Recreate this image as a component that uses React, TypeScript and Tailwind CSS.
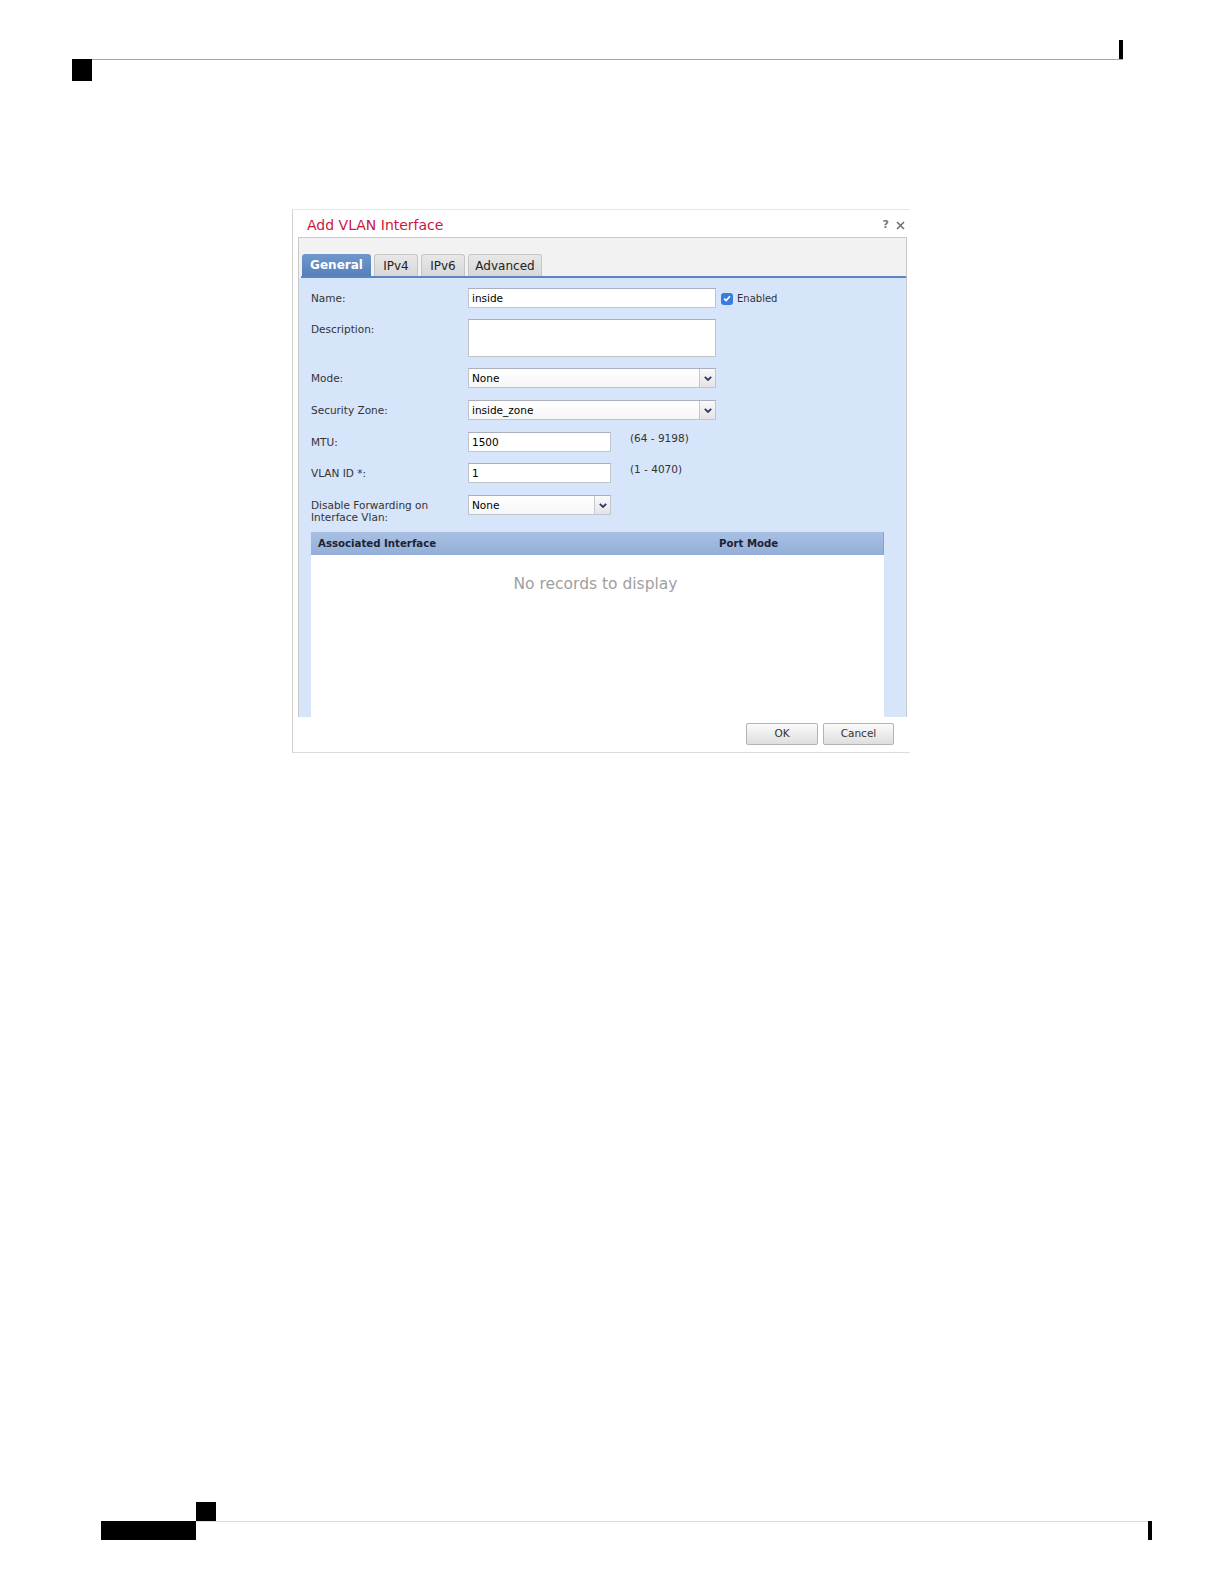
import React from 'react';

function Chevron() {
  return (
    <svg width="8" height="5" viewBox="0 0 8 5">
      <path d="M0.8 0.8 L4 4 L7.2 0.8" fill="none" stroke="#2b3a66" strokeWidth="1.8" />
    </svg>
  );
}

function Label({ children }: { children: React.ReactNode }) {
  return <div className="w-[157px] h-[20px] pt-[1px] flex items-center text-[10.5px] text-[#333]">{children}</div>;
}

function Field({ value, wide }: { value: string; wide?: boolean }) {
  return (
    <div
      className={`${wide ? 'w-[248px]' : 'w-[143px]'} h-[20px] bg-white border border-[#bfc5cd] border-t-[#a9b0ba] flex items-center px-[3px] pt-[1px] text-[10.5px] text-black`}
    >
      {value}
    </div>
  );
}

function Select({ value, wide }: { value: string; wide?: boolean }) {
  return (
    <div
      className={`${wide ? 'w-[248px]' : 'w-[143px]'} h-[20px] bg-white border border-[#bfc5cd] border-t-[#a9b0ba] flex items-stretch text-[10.5px] text-black`}
    >
      <div className="flex-1 flex items-center px-[3px] pt-[1px] bg-gradient-to-b from-white to-[#f6f6f6]">{value}</div>
      <div className="w-[16px] border-l border-[#c4c8ce] bg-gradient-to-b from-[#fafafa] to-[#e4e4e4] flex items-center justify-center">
        <Chevron />
      </div>
    </div>
  );
}

function Hint({ children }: { children: React.ReactNode }) {
  return <div className="ml-[19px] text-[10.5px] text-[#333] leading-[12px]">{children}</div>;
}

export default function App() {
  return (
    <div className="w-[1224px] h-[1584px] bg-white flex flex-col font-['DejaVu_Sans',sans-serif]">
      {/* page header */}
      <div className="pt-[40px] pl-[72px] pr-[101px]">
        <div className="flex justify-end">
          <div className="w-[4px] h-[19px] bg-black" />
        </div>
        <div className="flex">
          <div className="w-[20px] h-[22px] bg-black" />
          <div className="flex-1 h-px bg-[#a8a8a8]" />
        </div>
      </div>

      {/* dialog */}
      <div className="mt-[128px] ml-[292px] w-[618px] border-l border-t border-b border-l-[#cfcfcf] border-t-[#e6e6e6] border-b-[#dcdcdc] bg-white">
        <div className="h-[27px] pt-[3px] flex items-center justify-between pl-[14px] pr-[5px]">
          <span className="text-[14px] text-[#cc1541]">Add VLAN Interface</span>
          <div className="flex items-center gap-[7px] text-[#777] text-[11px] font-bold">
            <span>?</span>
            <svg width="9" height="9" viewBox="0 0 9 9">
              <path d="M1 1 L8 8 M8 1 L1 8" stroke="#6f6f6f" strokeWidth="1.6" />
            </svg>
          </div>
        </div>

        <div className="ml-[5px] mr-[3px] border-x border-t border-[#c8c8c8] bg-[#f2f2f2]">
          <div className="pt-[16px] pl-[3px] flex gap-[3px] items-end">
            <div className="w-[69px] h-[22px] rounded-t-[3px] bg-gradient-to-b from-[#6f98cc] to-[#5580bb] text-white font-bold text-[12px] flex items-center justify-center">
              General
            </div>
            <div className="w-[44px] h-[22px] rounded-t-[3px] border border-b-0 border-[#c6c6c6] bg-gradient-to-b from-[#e8e8e8] to-[#d8d8d8] text-[#222] text-[12px] flex items-center justify-center">
              IPv4
            </div>
            <div className="w-[44px] h-[22px] rounded-t-[3px] border border-b-0 border-[#c6c6c6] bg-gradient-to-b from-[#e8e8e8] to-[#d8d8d8] text-[#222] text-[12px] flex items-center justify-center">
              IPv6
            </div>
            <div className="w-[74px] h-[22px] rounded-t-[3px] border border-b-0 border-[#c6c6c6] bg-gradient-to-b from-[#e8e8e8] to-[#d8d8d8] text-[#222] text-[12px] flex items-center justify-center">
              Advanced
            </div>
          </div>
          <div className="ml-[2px] h-[2px] bg-[#5b86bf]" />

          <div className="bg-[#d6e5fa] pt-[10px] pl-[12px] pr-[22px]">
            <div className="flex items-start">
              <Label>Name:</Label>
              <Field value="inside" wide />
              <div className="ml-[5px] h-[20px] pt-[1px] flex items-center gap-[4px]">
                <div className="w-[12px] h-[12px] rounded-[3px] bg-[#3a7be0] flex items-center justify-center">
                  <svg width="8" height="7" viewBox="0 0 8 7">
                    <path d="M1 3.6 L3.1 5.6 L7 1.2" fill="none" stroke="white" strokeWidth="1.6" />
                  </svg>
                </div>
                <span className="text-[10px] text-[#333]">Enabled</span>
              </div>
            </div>

            <div className="mt-[11px] flex items-start">
              <Label>Description:</Label>
              <div className="w-[248px] h-[38px] bg-white border border-[#bfc5cd] border-t-[#a9b0ba]" />
            </div>

            <div className="mt-[11px] flex items-start">
              <Label>Mode:</Label>
              <Select value="None" wide />
            </div>

            <div className="mt-[12px] flex items-start">
              <Label>Security Zone:</Label>
              <Select value="inside_zone" wide />
            </div>

            <div className="mt-[12px] flex items-start">
              <Label>MTU:</Label>
              <Field value="1500" />
              <Hint>(64 - 9198)</Hint>
            </div>

            <div className="mt-[11px] flex items-start">
              <Label>VLAN ID *:</Label>
              <Field value="1" />
              <Hint>(1 - 4070)</Hint>
            </div>

            <div className="mt-[12px] flex items-start">
              <div className="w-[157px] pt-[4px] text-[10.5px] leading-[12px] text-[#333]">
                Disable Forwarding on
                <br />
                Interface Vlan:
              </div>
              <Select value="None" />
            </div>

            <div className="mt-[9px] w-[573px]">
              <div className="h-[23px] flex items-center bg-gradient-to-b from-[#a9c0e3] to-[#93aed8] border-r border-[#8aa2c8] text-[10.2px] font-bold text-[#1d2333]">
                <div className="w-[408px] pl-[7px]">Associated Interface</div>
                <div>Port Mode</div>
              </div>
              <div className="h-[162px] bg-white pt-[18px] pr-[4px] text-center text-[15.5px] text-[#a0a0a0]">
                No records to display
              </div>
            </div>
          </div>
        </div>

        <div className="pt-[6px] pb-[7px] pr-[16px] flex justify-end gap-[5px]">
          <div className="w-[72px] h-[22px] rounded-[2px] border border-[#b3b3b3] bg-gradient-to-b from-[#fbfbfb] to-[#dedede] flex items-center justify-center text-[10.5px] text-[#333]">
            OK
          </div>
          <div className="w-[71px] h-[22px] rounded-[2px] border border-[#b3b3b3] bg-gradient-to-b from-[#fbfbfb] to-[#dedede] flex items-center justify-center text-[10.5px] text-[#333]">
            Cancel
          </div>
        </div>
      </div>

      {/* page footer */}
      <div className="mt-auto mb-[44px] pl-[101px] pr-[72px]">
        <div className="flex">
          <div className="w-[95px]" />
          <div className="w-[20px] h-[19px] bg-black" />
        </div>
        <div className="h-px bg-[#dcdcdc]" />
        <div className="flex justify-between -mt-px">
          <div className="w-[95px] h-[19px] bg-black" />
          <div className="w-[4px] h-[19px] bg-black" />
        </div>
      </div>
    </div>
  );
}
